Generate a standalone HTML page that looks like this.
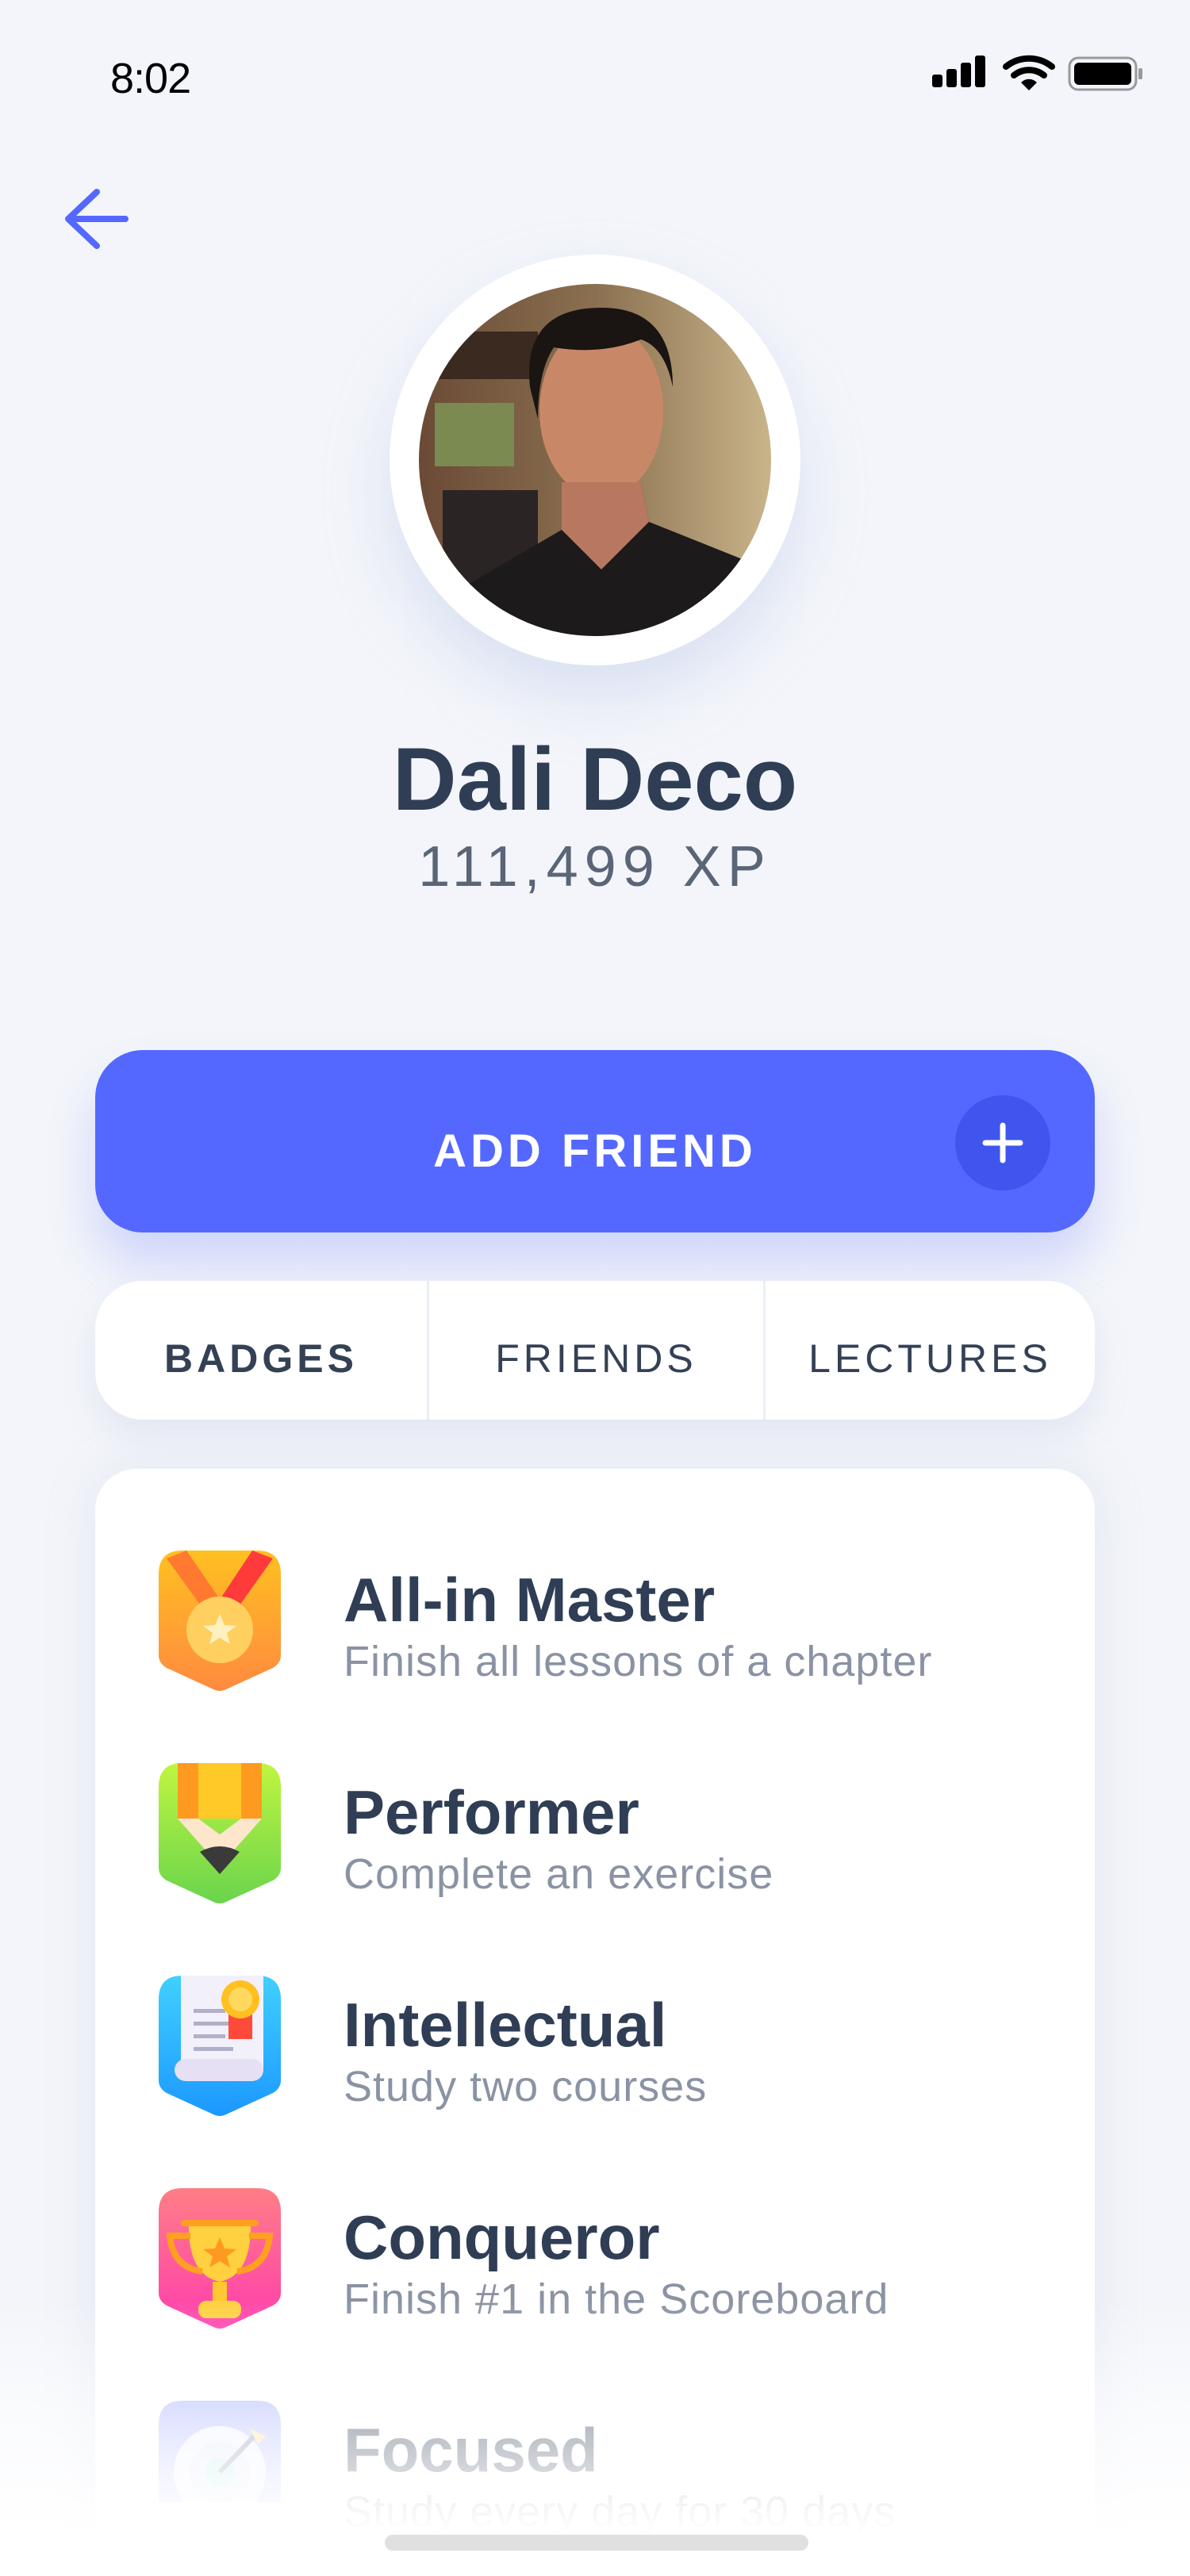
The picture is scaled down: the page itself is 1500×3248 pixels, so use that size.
<!DOCTYPE html>
<html style="width:1500px;height:3248px;overflow:hidden"><head><meta charset="utf-8"><style>
*{margin:0;padding:0;box-sizing:border-box}
body{width:1500px;height:3248px;background:#F3F5FA;font-family:"Liberation Sans",sans-serif;position:relative;overflow:hidden}
.abs{position:absolute}
.time{left:139px;top:68px;font-size:54px;color:#000;letter-spacing:-1px}
.name{left:0;width:1500px;top:918px;text-align:center;font-size:112px;font-weight:bold;color:#2F3E55;letter-spacing:0px}
.xp{left:0;width:1500px;top:1052px;text-align:center;font-size:72px;color:#5A6577;letter-spacing:8px}
.btn{left:120px;top:1324px;width:1260px;height:230px;border-radius:60px;background:#5468FF;box-shadow:0 40px 60px rgba(84,104,255,0.22)}
.btn .t{position:absolute;left:0;right:0;top:94px;text-align:center;color:#fff;font-weight:bold;font-size:58px;letter-spacing:5px}
.plus{position:absolute;left:1084px;top:57px;width:120px;height:120px;border-radius:60px;background:#3F55EE}
.tabs{left:120px;top:1615px;width:1260px;height:175px;border-radius:60px;background:#fff;box-shadow:0 20px 40px rgba(180,190,220,0.25)}
.tab{position:absolute;top:69px;font-size:50px;color:#344155;letter-spacing:5px;text-align:center}
.div{position:absolute;top:0;width:3px;height:175px;background:#ECEEF5}
.card{left:120px;top:1852px;width:1260px;height:1396px;border-radius:52px 52px 0 0;background:#fff;box-shadow:0 0 60px rgba(180,190,220,0.25)}
.ttl{position:absolute;left:433px;font-size:78px;font-weight:bold;color:#2F3E55}
.sub{position:absolute;left:433px;font-size:54px;color:#8A93A3;letter-spacing:1px}
.fade{left:0;top:2900px;width:1500px;height:348px;background:linear-gradient(rgba(255,255,255,0),rgba(255,255,255,0.6) 40%,#fff 85%)}
</style></head><body>
<div class="abs time">8:02</div>
<svg class="abs" style="left:1170px;top:64px" width="280" height="60" viewBox="0 0 280 60">
<rect x="5" y="30" width="13" height="16" rx="3"/><rect x="23" y="23" width="13" height="23" rx="3"/><rect x="41" y="15" width="13" height="31" rx="3"/><rect x="59" y="6" width="13" height="40" rx="3"/>
<path d="M98 20 a46 46 0 0 1 58 0" stroke="#000" stroke-width="8" fill="none" stroke-linecap="round"/>
<path d="M108 31 a30 30 0 0 1 38 0" stroke="#000" stroke-width="8" fill="none" stroke-linecap="round"/>
<path d="M117 40 L127 50 L137 40 a14 14 0 0 0 -20 0Z"/>
<rect x="178" y="9" width="84" height="40" rx="11" fill="none" stroke="#999" stroke-width="3"/><rect x="184" y="15" width="72" height="28" rx="6"/><rect x="265" y="22" width="5" height="14" rx="2" fill="#999"/>
</svg>
<svg class="abs" style="left:80px;top:236px" width="84" height="84" viewBox="0 0 84 84"><path d="M78 40 H8 M42 6 L6 40 L42 74" stroke="#5468FF" stroke-width="8" fill="none" stroke-linecap="round" stroke-linejoin="round"/></svg>
<div class="abs" style="left:491px;top:321px;width:518px;height:518px;border-radius:50%;background:#fff;box-shadow:0 40px 80px rgba(170,185,225,0.35)"></div>
<svg class="abs" style="left:528px;top:358px" width="444" height="444" viewBox="0 0 444 444">
<defs><clipPath id="c"><circle cx="222" cy="222" r="222"/></clipPath><linearGradient id="bg" x1="0" x2="1"><stop offset="0" stop-color="#6b4a36"/><stop offset="0.5" stop-color="#8a7050"/><stop offset="1" stop-color="#c9b48a"/></linearGradient></defs>
<g clip-path="url(#c)"><rect width="444" height="444" fill="url(#bg)"/>
<rect x="0" y="60" width="150" height="60" fill="#3a2a20"/><rect x="20" y="150" width="100" height="80" fill="#7a8a50"/><rect x="30" y="260" width="120" height="120" fill="#2a2424"/>
<ellipse cx="230" cy="160" rx="78" ry="110" fill="#c88868"/>
<path d="M140 130 Q130 30 230 30 Q320 30 320 130 Q310 80 280 70 Q230 90 170 80 Q150 110 150 170Z" fill="#1a1412"/>
<path d="M180 250 Q230 300 280 250 L290 300 L440 360 L440 444 L60 444 L60 380 L180 310Z" fill="#1c1a1a"/>
<path d="M180 250 L180 310 L230 360 L290 300 L280 250Z" fill="#b87860"/></g></svg>
<div class="abs name">Dali Deco</div>
<div class="abs xp">111,499 XP</div>
<div class="abs btn"><div class="t">ADD FRIEND</div><div class="plus"><svg width="120" height="120"><path d="M60 38V82M38 60H82" stroke="#fff" stroke-width="7" stroke-linecap="round"/></svg></div></div>
<div class="abs tabs">
<div class="tab" style="left:0;width:418px;font-weight:bold">BADGES</div>
<div class="div" style="left:418px"></div>
<div class="tab" style="left:421px;width:421px">FRIENDS</div>
<div class="div" style="left:842px"></div>
<div class="tab" style="left:845px;width:415px">LECTURES</div>
</div>
<div class="abs card"></div>
<svg class="abs" style="left:200px;top:1955px" width="154" height="1200" viewBox="0 0 154 1200">
<defs>
<path id="s" d="M0 30Q0 0 30 0H124Q154 0 154 30V132Q154 142 144 148L85 175Q77 179 69 175L10 148Q0 142 0 132Z"/>
<linearGradient id="g1" x1="0" y1="0" x2="0" y2="1"><stop offset="0" stop-color="#FFC020"/><stop offset="1" stop-color="#FF8A40"/></linearGradient>
<linearGradient id="g2" x1="0" y1="0" x2="0" y2="1"><stop offset="0" stop-color="#C0F540"/><stop offset="1" stop-color="#6AD44C"/></linearGradient>
<linearGradient id="g3" x1="0" y1="0" x2="0" y2="1"><stop offset="0" stop-color="#40D0FF"/><stop offset="1" stop-color="#1C98FF"/></linearGradient>
<linearGradient id="g4" x1="0" y1="0" x2="0" y2="1"><stop offset="0" stop-color="#FF7E86"/><stop offset="1" stop-color="#FF3DAE"/></linearGradient>
<linearGradient id="g5" x1="0" y1="0" x2="0" y2="1"><stop offset="0" stop-color="#A8B2FF"/><stop offset="1" stop-color="#D8DDFF"/></linearGradient>
</defs>
<use href="#s" fill="url(#g1)"/>
<path d="M10 10 L75 100 L90 80 L35 0Z" fill="#FF7A30"/><path d="M144 10 L80 100 L65 80 L118 0Z" fill="#FF3A3A"/>
<circle cx="77" cy="100" r="42" fill="#FFD060"/><path d="M77 80 L83 94 L98 95 L86 104 L90 118 L77 110 L64 118 L68 104 L56 95 L71 94Z" fill="#FFF0C0"/>
<g transform="translate(0,268)"><use href="#s" fill="url(#g2)"/>
<rect x="24" y="0" width="106" height="70" fill="#FFCA28"/><rect x="24" y="0" width="26" height="70" fill="#FF9A20"/><rect x="104" y="0" width="26" height="70" fill="#FF9A20"/>
<path d="M24 70 L50 70 L77 90 L104 70 L130 70 L77 130Z" fill="#FDE6CC"/><path d="M52 112 Q77 98 102 112 L77 140Z" fill="#3a3a3a"/></g>
<g transform="translate(0,536)"><use href="#s" fill="url(#g3)"/>
<rect x="28" y="0" width="104" height="120" fill="#F2F0FA"/><rect x="20" y="105" width="112" height="28" rx="14" fill="#E6E0F5"/>
<rect x="44" y="42" width="40" height="5" fill="#B0B0C8"/><rect x="44" y="58" width="50" height="5" fill="#B0B0C8"/><rect x="44" y="74" width="40" height="5" fill="#B0B0C8"/><rect x="44" y="90" width="50" height="5" fill="#B0B0C8"/>
<rect x="88" y="40" width="30" height="40" fill="#FF4A3A"/><circle cx="103" cy="30" r="24" fill="#FFC020"/><circle cx="103" cy="30" r="15" fill="#FFD860"/></g>
<g transform="translate(0,804)"><use href="#s" fill="url(#g4)"/>
<rect x="28" y="40" width="98" height="8" rx="4" fill="#FFA020"/><path d="M38 48 H116 Q116 110 77 118 Q38 110 38 48Z" fill="#FFD040"/>
<path d="M40 60 H14 Q18 100 55 105" stroke="#FFA020" stroke-width="8" fill="none"/><path d="M114 60 H140 Q136 100 99 105" stroke="#FFA020" stroke-width="8" fill="none"/>
<path d="M77 62 L83 76 L98 77 L86 86 L90 100 L77 92 L64 100 L68 86 L56 77 L71 76Z" fill="#FF9A20"/>
<rect x="68" y="118" width="18" height="26" fill="#FFC830"/><rect x="50" y="142" width="54" height="22" rx="10" fill="#FFD040"/></g>
<g transform="translate(0,1072)"><use href="#s" fill="url(#g5)"/><circle cx="77" cy="90" r="58" fill="#F0F2FF"/><circle cx="77" cy="90" r="38" fill="#E4E8FA"/><circle cx="77" cy="90" r="18" fill="#B8F0E8"/><path d="M77 90 L120 45" stroke="#8890B0" stroke-width="6"/><path d="M115 35 L135 45 L125 55Z" fill="#FFE090"/></g>
</svg>
<div class="ttl" style="top:1972px">All-in Master</div><div class="sub" style="top:2064px">Finish all lessons of a chapter</div>
<div class="ttl" style="top:2240px">Performer</div><div class="sub" style="top:2332px">Complete an exercise</div>
<div class="ttl" style="top:2508px">Intellectual</div><div class="sub" style="top:2600px">Study two courses</div>
<div class="ttl" style="top:2776px">Conqueror</div><div class="sub" style="top:2868px">Finish #1 in the Scoreboard</div>
<div class="ttl" style="top:3044px">Focused</div><div class="sub" style="top:3136px">Study every day for 30 days</div>
<div class="abs fade"></div>
<div class="abs" style="left:485px;top:3196px;width:534px;height:20px;border-radius:10px;background:#E0E0E2"></div>
</body></html>
